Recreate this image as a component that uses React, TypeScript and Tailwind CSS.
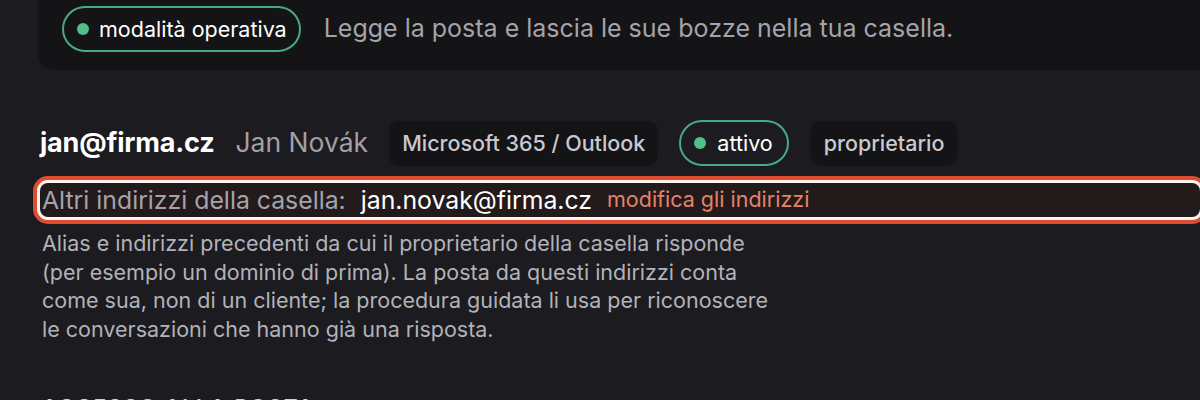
import React from "react";

function Dot() {
  return <span className="inline-block w-[12px] h-[12px] rounded-full bg-[#4fbf8c]" />;
}

export default function App() {
  return (
    <div className="w-[1200px] h-[400px] overflow-hidden bg-[#1c1b1f] font-['Inter','Noto_Sans',sans-serif]">
      {/* top card */}
      <div className="ml-[38px] h-[70px] rounded-bl-[16px] bg-[#141316] flex items-start pt-[6px] pl-[24px] gap-[23px]">
        <div className="flex items-center gap-[10px] h-[46px] pl-[13px] pr-[12px] rounded-full border-2 border-[#49a97f] text-[21.5px] text-white">
          <Dot />
          <span>modalità operativa</span>
        </div>
        <div className="h-[46px] flex items-center text-[25px] text-[#a4a4ab]">
          Legge la posta e lascia le sue bozze nella tua casella.
        </div>
      </div>

      {/* account row */}
      <div className="ml-[40px] mt-[50px] flex items-center gap-[21px] h-[46px]">
        <span className="text-[27px] font-bold text-white tracking-[-0.2px]">jan@firma.cz</span>
        <span className="text-[26.5px] text-[#a0a0a7]">Jan Novák</span>
        <span className="h-[45px] px-[13px] flex items-center rounded-[10px] bg-[#141316] text-[21.5px] font-medium text-[#c9c9cf]">
          Microsoft 365 / Outlook
        </span>
        <span className="h-[46px] pl-[13px] pr-[14px] flex items-center gap-[11px] rounded-full border-2 border-[#49a97f] text-[21.5px] text-white">
          <Dot />
          attivo
        </span>
        <span className="h-[45px] px-[14px] flex items-center rounded-[10px] bg-[#141316] text-[21.5px] font-medium text-[#c9c9cf]">
          proprietario
        </span>
      </div>

      {/* highlighted aliases row */}
      <div className="ml-[40px] mt-[17px] h-[34px] flex items-center gap-[15px] rounded-[8px] bg-[#231a1c] shadow-[0_0_0_3px_#fff4ee,0_0_0_7px_#e04b33] pl-[2px] leading-none">
        <span className="text-[24.8px] text-[#a3a3aa]">Altri indirizzi della casella:</span>
        <span className="text-[24.8px] text-white">jan.novak@firma.cz</span>
        <span className="text-[21.5px] text-[#e3836a]">modifica gli indirizzi</span>
      </div>

      {/* description */}
      <p className="ml-[42px] mt-[12px] w-[800px] text-[21.5px] leading-[28.7px] text-[#b2b2b9]">
        Alias e indirizzi precedenti da cui il proprietario della casella risponde
        <br />
        (per esempio un dominio di prima). La posta da questi indirizzi conta
        <br />
        come sua, non di un cliente; la procedura guidata li usa per riconoscere
        <br />
        le conversazioni che hanno già una risposta.
      </p>

      <div className="ml-[42px] mt-[48px] text-[21px] font-semibold tracking-[2px] text-[#d0d0d6]">
        ACCESSO ALLA POSTA
      </div>
    </div>
  );
}
